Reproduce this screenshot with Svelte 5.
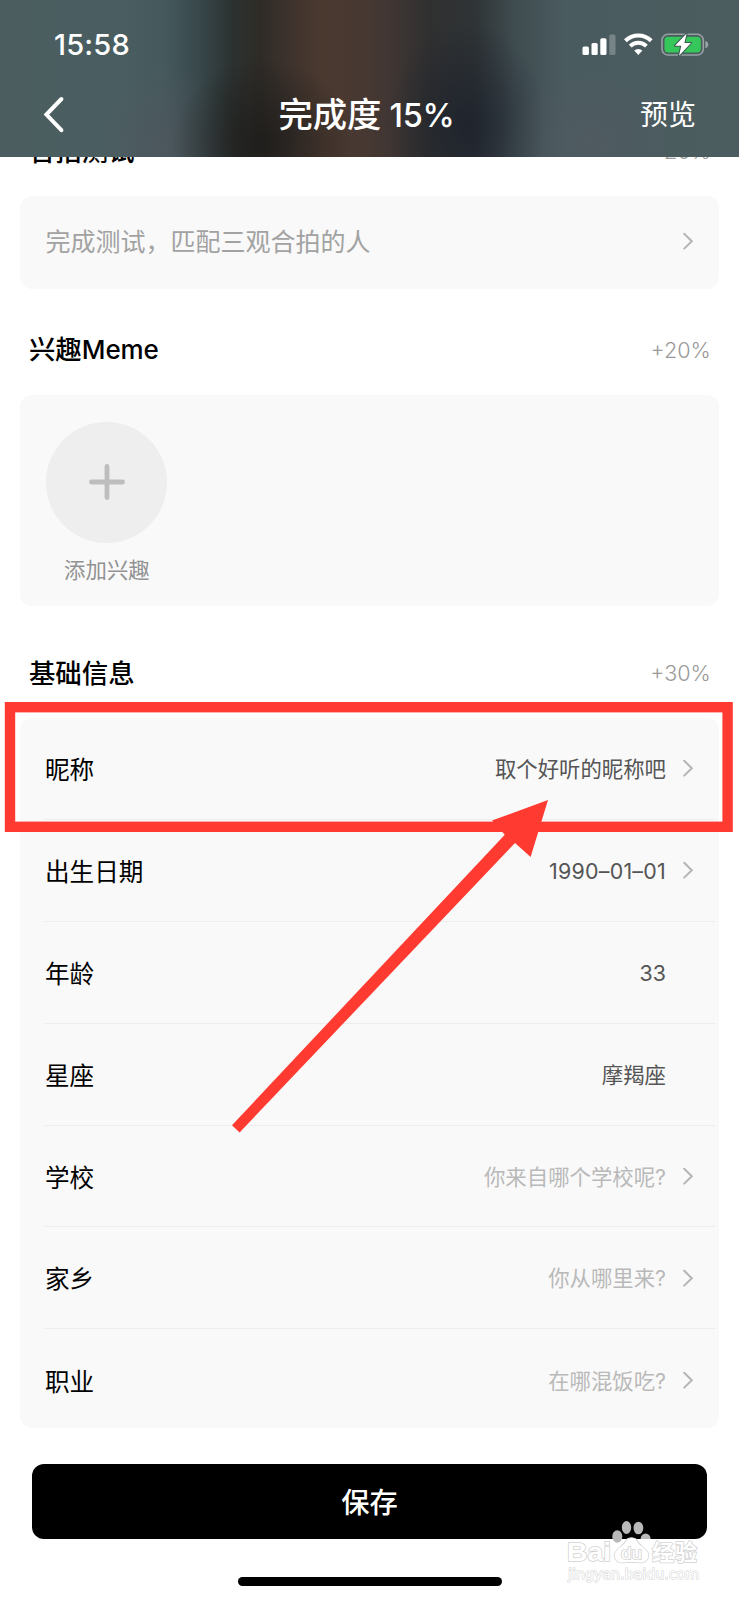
<script>
  const rows = [
    { label: '昵称', value: '取个好听的昵称吧', arrow: true },
    { label: '出生日期', value: '1990–01–01', arrow: true, latin: true, wide: true },
    { label: '年龄', value: '33', latin: true },
    { label: '星座', value: '摩羯座' },
    { label: '学校', value: '你来自哪个学校呢?', arrow: true, empty: true },
    { label: '家乡', value: '你从哪里来?', arrow: true, empty: true },
    { label: '职业', value: '在哪混饭吃?', arrow: true, empty: true }
  ];
</script>

{#snippet chevron()}
  <svg class="chevron" width="12" height="20" viewBox="0 0 12 20">
    <path d="M2.2 2.8 L9.8 10.2 L2.2 17.6" fill="none" stroke="#b4b4b4" stroke-width="2" stroke-linecap="round" stroke-linejoin="miter" />
  </svg>
{/snippet}

<div class="screen">
  <header>
    <div class="status">
      <span class="time">15:58</span>
      <svg class="signals" width="128" height="26" viewBox="0 0 128 26">
        <g fill="#fff">
          <rect x="1.5" y="13.5" width="6.4" height="8.5" rx="1.6" />
          <rect x="10.5" y="10" width="6.2" height="12" rx="1.6" />
          <rect x="19.3" y="5.2" width="6.2" height="16.8" rx="1.6" />
          <rect x="28.3" y="1.5" width="6.2" height="20.5" rx="1.6" opacity=".25" />
        </g>
        <g fill="none" stroke="#fff" stroke-width="4">
          <path d="M44.4 7.8 A18.5 18.5 0 0 1 70.2 7.8" />
          <path d="M49.2 13.1 A11.7 11.7 0 0 1 65.4 13.1" />
        </g>
        <path d="M53.2 17.6 A6 6 0 0 1 61.4 17.6 L57.3 21.9 Z" fill="#fff" />
        <rect x="81" y="1.2" width="41.3" height="20.8" rx="6" fill="none" stroke="#fff" stroke-opacity=".42" stroke-width="1.6" />
        <rect x="83.5" y="3.8" width="36.3" height="15.6" rx="3.6" fill="#35c759" />
        <path d="M124.4 8 C128.2 8.6 128.2 14.6 124.4 15.2 Z" fill="#fff" opacity=".45" />
        <path d="M105.6 0.4 L94 12.8 H100.3 L98 22.8 L110 9.9 H103.4 Z" fill="#fff" stroke="#3f5654" stroke-width="2" paint-order="stroke" stroke-linejoin="round" />
      </svg>
    </div>
    <div class="nav">
      <svg class="back" width="24" height="40" viewBox="0 0 24 40">
        <path d="M18.4 4 L3.400 19.600 L18.400 35.200" fill="none" stroke="#fff" stroke-width="4" stroke-linecap="round" stroke-linejoin="miter" />
      </svg>
      <h1>完成度 <span>15%</span></h1>
      <span class="preview">预览</span>
    </div>
  </header>

  <main>
    <section class="heading"><h2>合拍测试</h2><span>+20%</span></section>
    <div class="card test">
      <span>完成测试，匹配三观合拍的人</span>
      {@render chevron()}
    </div>

    <section class="heading second"><h2>兴趣<span>Meme</span></h2><span>+20%</span></section>
    <div class="card interests">
      <div class="add">
        <div class="circle">
          <svg width="38" height="38" viewBox="0 0 38 38">
            <path d="M19 3.5 V34.5 M3.5 19 H34.5" stroke="#bdbdbd" stroke-width="4.8" stroke-linecap="round" />
          </svg>
        </div>
        <span>添加兴趣</span>
      </div>
    </div>

    <section class="heading third"><h2>基础信息</h2><span>+30%</span></section>
    <div class="card info">
      {#each rows as row}
        <div class="row">
          <span class="label">{row.label}</span>
          <span class="value" class:empty={row.empty} class:latin={row.latin} class:wide={row.wide}>{row.value}</span>
          <span class="slot">{#if row.arrow}{@render chevron()}{/if}</span>
        </div>
      {/each}
    </div>
  </main>

  <button>保存</button>
  <div class="home"></div>

  <svg class="overlay" width="739" height="1600" viewBox="0 0 739 1600">
    <rect x="10" y="707.2" width="717.6" height="119.6" fill="none" stroke="#ff3a30" stroke-width="10.4" />
    <path d="M232 1125.2 L504.8 834.8 L492 820.6 L548 800 L530.6 857 L515 843 L239.6 1132.4 Z" fill="#ff3a30" />
  </svg>

  <svg class="mark" width="150" height="90" viewBox="560 1510 150 90">
    <g fill="#b9b9b9">
      <ellipse cx="617.3" cy="1536.5" rx="5" ry="6.2" />
      <ellipse cx="626.5" cy="1527.5" rx="4.7" ry="6.5" />
      <ellipse cx="638.4" cy="1528" rx="4.900" ry="6.300" />
      <path d="M640.600 1539 A5 5.500 0 0 1 650.600 1539 Z" />
      <path d="M627.500 1539 Q631.500 1535.500 635.500 1539 Z" />
    </g>
    <g fill="#fff" stroke="#d2d2d2" stroke-width="1.5" paint-order="stroke">
      <text x="567" y="1561" font-size="26" font-weight="700" textLength="44" lengthAdjust="spacingAndGlyphs">Bai</text>
      <path d="M627.500 1539 Q631.500 1537.500 635.500 1539 C638 1543 639 1544.500 642 1546.500 C647 1550 650 1554 647.5 1559 C644.5 1564.5 638 1562 631.5 1562 C625 1562 618.5 1564.5 615.5 1559 C613 1554 616 1550 621 1546.500 C624 1544.500 625 1543 627.500 1539 Z" />
      <text x="621" y="1558.500" font-size="17" textLength="21" lengthAdjust="spacingAndGlyphs">du</text>
      <text x="652" y="1560" font-size="22" font-weight="700" textLength="45" class="cjk">经验</text>
      <text x="568" y="1579" font-size="13.5" textLength="131" lengthAdjust="spacingAndGlyphs" class="site">jingyan.baidu.com</text>
    </g>
  </svg>
</div>

<style>
  :global(body) { margin: 0; background: #fff; }
  .screen {
    position: relative;
    width: 739px;
    height: 1600px;
    overflow: hidden;
    background: #fff;
    display: flex;
    flex-direction: column;
    color: #000;
    font-family: Inter, "Noto Sans CJK SC", sans-serif;
  }
  header {
    position: relative;
    z-index: 1;
    flex: none;
    height: 156.7px;
    box-sizing: border-box;
    color: #fff;
    background:
      radial-gradient(ellipse 80px 105px at 466px 125px, rgba(27, 32, 43, .8), transparent),
      radial-gradient(ellipse 90px 85px at 262px 142px, rgba(29, 28, 26, .85), transparent),
      radial-gradient(ellipse 70px 90px at 165px 150px, rgba(82, 86, 94, .6), transparent),
      radial-gradient(ellipse 90px 70px at 590px 140px, rgba(82, 90, 98, .6), transparent),
      linear-gradient(90deg, #4b5d5f 0, #4a5e61 120px, #45595d 165px, #37474a 200px, #2c3231 232px, #2e2b27 260px, #41342e 295px, #4a392f 322px, #473832 365px, #403633 390px, #303030 430px, #2f3436 475px, #3f4c50 515px, #4a5b5f 565px, #4b5d5f 739px);
  }
  .status {
    height: 88px;
    box-sizing: border-box;
    padding: 0 30px 0 54px;
    display: flex;
    justify-content: space-between;
    align-items: center;
  }
  .time { font-size: 29px; font-weight: 500; letter-spacing: .2px; line-height: 36px; padding-top: 2px; }
  .signals { margin-top: 3px; }
  .nav {
    height: 54px;
    display: grid;
    grid-template-columns: 120px 1fr 120px;
    align-items: center;
    padding: 0 43px;
  }
  h1 { margin: 0 0 0 -6px; font-size: 34.3px; font-weight: 500; text-align: center; line-height: 50px; white-space: nowrap; }
  h1 span { font-size: 32.500px; letter-spacing: -.3px; margin-left: -1px; }
  .preview { font-size: 28px; text-align: right; line-height: 42px; }
  main { flex: none; padding: 0 19.6px; }
  .heading {
    box-sizing: border-box;
    display: flex;
    justify-content: space-between;
    align-items: center;
    padding: 0 8.6px 0 9.4px;
  }
  .heading:first-child { height: 93px; margin-top: -53.7px; padding-top: 2px; }
  .heading.second { height: 106px; padding-top: 15px; }
  .heading.third { height: 112px; padding-top: 21px; }
  h2 { margin: 0; font-size: 26.4px; font-weight: 500; line-height: 38px; }
  h2 span { font-size: 26px; letter-spacing: -.1px; }
  .heading > span { font-size: 21.6px; color: #999; font-weight: 300; }
  .card { background: #f9f9f9; border-radius: 12px; }
  .test {
    height: 93px;
    box-sizing: border-box;
    padding: 0 25px 4px 26px;
    display: flex;
    justify-content: space-between;
    align-items: center;
    color: #a2a2a2;
    font-size: 25px;
  }
  .test span { padding-bottom: 2px; }
  .chevron { display: block; }
  .interests { height: 211px; box-sizing: border-box; padding: 26.500px 26.800px; }
  .add { width: 121px; display: flex; flex-direction: column; align-items: center; }
  .circle {
    width: 121px;
    height: 121px;
    border-radius: 50%;
    background: #eee;
    display: flex;
    align-items: center;
    justify-content: center;
  }
  .add > span { margin-top: 12.5px; font-size: 21.4px; line-height: 30px; color: #929292; }
  .info { height: 710px; overflow: hidden; }
  .row {
    height: 101.9px;
    box-sizing: border-box;
    margin: 0 4px 0 25.4px;
    display: flex;
    align-items: center;
    border-bottom: 1.2px solid #ededed;
  }
  .row:last-child { border-bottom: 0; }
  .label { flex: 1; font-size: 24.6px; margin-top: -1px; }
  .value { font-size: 21.4px; color: #555; margin-top: -2px; }
  .value.latin { margin-top: 1px; }
  .value.wide { letter-spacing: .25px; }
  .value.empty { color: #b9b9b9; }
  .slot { width: 28px; margin-right: 21.400px; display: flex; justify-content: flex-end; }
  button {
    flex: none;
    margin: 36px 32px 0;
    height: 75px;
    border: 0;
    border-radius: 12px;
    background: #000;
    color: #fff;
    padding: 2px 0 0;
    font: 500 28.3px/42px Inter, "Noto Sans CJK SC", sans-serif;
  }
  .home { flex: none; width: 264px; height: 9px; border-radius: 5px; background: #000; margin: 38px auto 0; }
  .overlay { position: absolute; left: 0; top: 0; z-index: 2; }
  .mark { position: absolute; left: 560px; top: 1510px; z-index: 3; font-family: "Liberation Sans", sans-serif; }
  .cjk { font-family: "Noto Sans CJK SC", sans-serif; }
  .site { font-family: "DejaVu Sans", sans-serif; stroke-width: 1; }
</style>
